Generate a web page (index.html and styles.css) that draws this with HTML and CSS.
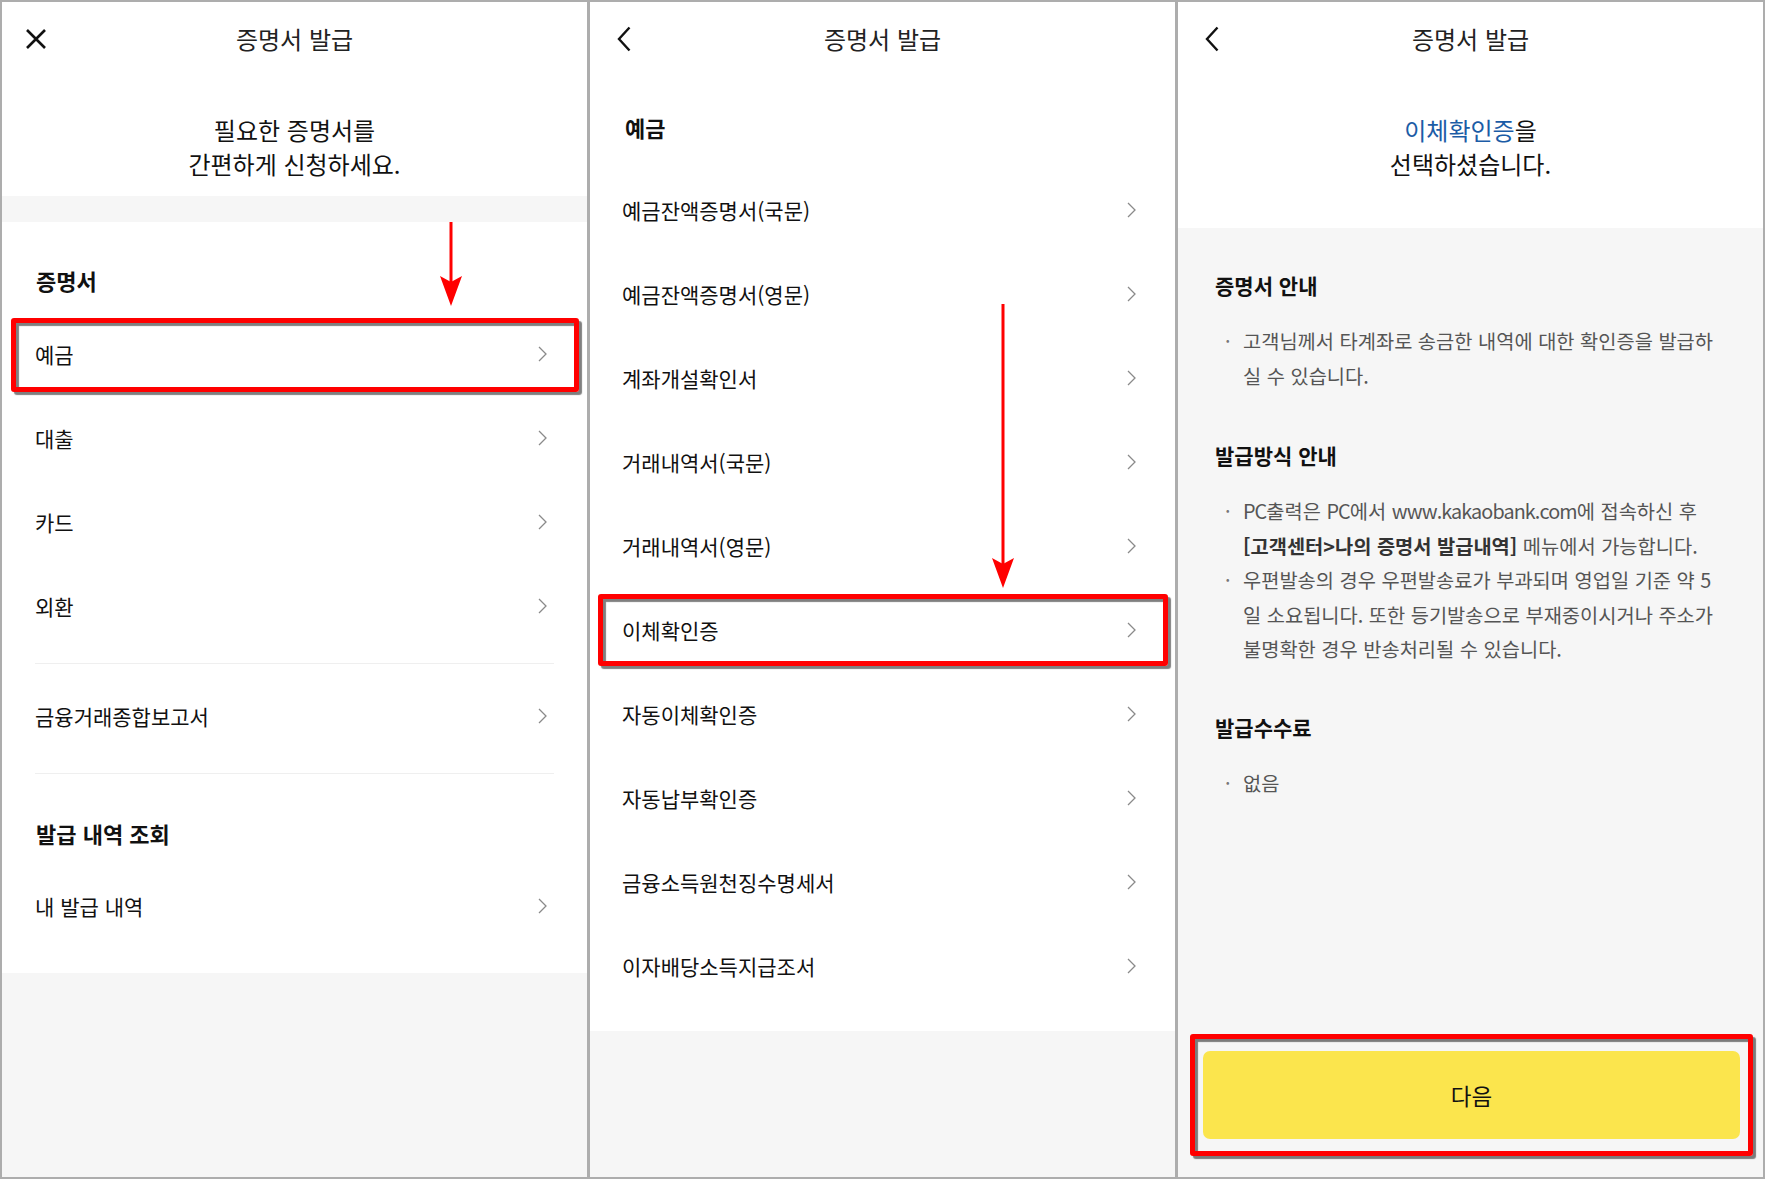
FILE: index.html
```html
<!DOCTYPE html>
<html lang="ko">
<head>
    <meta charset="UTF-8">
    <meta name="viewport" content="width=device-width, initial-scale=1.0">
    <title>증명서 발급</title>
    <link rel="stylesheet" href="styles.css">
</head>
<body>
    <div class="screens">

        <!-- 1. 증명서 종류 -->
        <div class="panel">
            <div class="topbar">
                <svg class="icon-close" width="22" height="22" viewBox="0 0 22 22"><path d="M2 2L20 20M20 2L2 20" stroke="#111" stroke-width="2.6" fill="none"/></svg>
                <div class="title">증명서 발급</div>
                <span></span>
            </div>
            <div class="intro">필요한 증명서를<br>간편하게 신청하세요.</div>
            <div class="band"></div>
            <div class="list-section">
                <h3 class="sec-title">증명서</h3>
                <div class="group">
                    <div class="row">예금 <svg class="chev" width="9" height="16" viewBox="0 0 9 16"><path d="M1 1L8 8L1 15" stroke="#8a8a8a" stroke-width="1.3" fill="none"/></svg>
                        <div class="mark mark-row"></div>
                    </div>
                    <div class="row">대출 <svg class="chev" width="9" height="16" viewBox="0 0 9 16"><path d="M1 1L8 8L1 15" stroke="#8a8a8a" stroke-width="1.3" fill="none"/></svg></div>
                    <div class="row">카드 <svg class="chev" width="9" height="16" viewBox="0 0 9 16"><path d="M1 1L8 8L1 15" stroke="#8a8a8a" stroke-width="1.3" fill="none"/></svg></div>
                    <div class="row">외환 <svg class="chev" width="9" height="16" viewBox="0 0 9 16"><path d="M1 1L8 8L1 15" stroke="#8a8a8a" stroke-width="1.3" fill="none"/></svg></div>
                </div>
                <div class="group group-single">
                    <div class="row">금융거래종합보고서 <svg class="chev" width="9" height="16" viewBox="0 0 9 16"><path d="M1 1L8 8L1 15" stroke="#8a8a8a" stroke-width="1.3" fill="none"/></svg></div>
                </div>
                <h3 class="sec-title sec-second">발급 내역 조회</h3>
                <div class="group group-last">
                    <div class="row">내 발급 내역 <svg class="chev" width="9" height="16" viewBox="0 0 9 16"><path d="M1 1L8 8L1 15" stroke="#8a8a8a" stroke-width="1.3" fill="none"/></svg></div>
                </div>
            </div>
            <svg class="arrow arrow-one" width="24" height="84" viewBox="0 0 24 84"><path d="M12 0V60" stroke="#f00" stroke-width="3"/><path d="M1 54L12 60L23 54L12 84Z" fill="#f00"/></svg>
        </div>

        <!-- 2. 예금 증명서 목록 -->
        <div class="panel">
            <div class="topbar">
                <svg class="icon-back" width="14" height="26" viewBox="0 0 14 26"><path d="M12.5 1.5L2 13L12.5 24.5" stroke="#111" stroke-width="2.4" fill="none"/></svg>
                <div class="title">증명서 발급</div>
                <span></span>
            </div>
            <div class="list-section list-deposit">
                <h3 class="sec-title">예금</h3>
                <div class="row">예금잔액증명서(국문) <svg class="chev" width="9" height="16" viewBox="0 0 9 16"><path d="M1 1L8 8L1 15" stroke="#8a8a8a" stroke-width="1.3" fill="none"/></svg></div>
                <div class="row">예금잔액증명서(영문) <svg class="chev" width="9" height="16" viewBox="0 0 9 16"><path d="M1 1L8 8L1 15" stroke="#8a8a8a" stroke-width="1.3" fill="none"/></svg></div>
                <div class="row">계좌개설확인서 <svg class="chev" width="9" height="16" viewBox="0 0 9 16"><path d="M1 1L8 8L1 15" stroke="#8a8a8a" stroke-width="1.3" fill="none"/></svg></div>
                <div class="row">거래내역서(국문) <svg class="chev" width="9" height="16" viewBox="0 0 9 16"><path d="M1 1L8 8L1 15" stroke="#8a8a8a" stroke-width="1.3" fill="none"/></svg></div>
                <div class="row">거래내역서(영문) <svg class="chev" width="9" height="16" viewBox="0 0 9 16"><path d="M1 1L8 8L1 15" stroke="#8a8a8a" stroke-width="1.3" fill="none"/></svg></div>
                <div class="row">이체확인증 <svg class="chev" width="9" height="16" viewBox="0 0 9 16"><path d="M1 1L8 8L1 15" stroke="#8a8a8a" stroke-width="1.3" fill="none"/></svg>
                    <div class="mark mark-row2"></div>
                </div>
                <div class="row">자동이체확인증 <svg class="chev" width="9" height="16" viewBox="0 0 9 16"><path d="M1 1L8 8L1 15" stroke="#8a8a8a" stroke-width="1.3" fill="none"/></svg></div>
                <div class="row">자동납부확인증 <svg class="chev" width="9" height="16" viewBox="0 0 9 16"><path d="M1 1L8 8L1 15" stroke="#8a8a8a" stroke-width="1.3" fill="none"/></svg></div>
                <div class="row">금융소득원천징수명세서 <svg class="chev" width="9" height="16" viewBox="0 0 9 16"><path d="M1 1L8 8L1 15" stroke="#8a8a8a" stroke-width="1.3" fill="none"/></svg></div>
                <div class="row">이자배당소득지급조서 <svg class="chev" width="9" height="16" viewBox="0 0 9 16"><path d="M1 1L8 8L1 15" stroke="#8a8a8a" stroke-width="1.3" fill="none"/></svg></div>
            </div>
            <svg class="arrow arrow-two" width="24" height="284" viewBox="0 0 24 284"><path d="M12 0V260" stroke="#f00" stroke-width="3"/><path d="M1 254L12 260L23 254L12 284Z" fill="#f00"/></svg>
        </div>

        <!-- 3. 선택 확인 -->
        <div class="panel">
            <div class="topbar">
                <svg class="icon-back" width="14" height="26" viewBox="0 0 14 26"><path d="M12.5 1.5L2 13L12.5 24.5" stroke="#111" stroke-width="2.4" fill="none"/></svg>
                <div class="title">증명서 발급</div>
                <span></span>
            </div>
            <div class="intro intro-picked"><span class="picked">이체확인증</span>을<br>선택하셨습니다.</div>
            <div class="info">
                <h3 class="info-title">증명서 안내</h3>
                <ul class="notes">
                    <li>고객님께서 타계좌로 송금한 내역에 대한 확인증을 발급하<br>실 수 있습니다.</li>
                </ul>
                <h3 class="info-title">발급방식 안내</h3>
                <ul class="notes notes-tight">
                    <li><span class="latin">PC</span>출력은 <span class="latin">PC</span>에서 <span class="latin">www.kakaobank.com</span>에 접속하신 후<br><b>[고객센터&gt;나의 증명서 발급내역]</b> 메뉴에서 가능합니다.</li>
                    <li>우편발송의 경우 우편발송료가 부과되며 영업일 기준 약 5<br>일 소요됩니다. 또한 등기발송으로 부재중이시거나 주소가<br>불명확한 경우 반송처리될 수 있습니다.</li>
                </ul>
                <h3 class="info-title">발급수수료</h3>
                <ul class="notes">
                    <li>없음</li>
                </ul>
            </div>
            <div class="bottom">
                <button class="next-btn">다음</button>
                <div class="mark mark-btn"></div>
            </div>
        </div>

    </div>
</body>
</html>
```

FILE: styles.css
```css
body {
    margin: 0;
    font-family: "Noto Sans CJK KR", "Noto Sans", sans-serif;
    color: #111;
}

.screens {
    display: flex;
    gap: 3px;
    padding: 2px;
    width: 1765px;
    height: 1179px;
    box-sizing: border-box;
    background: #adadad;
}

.panel {
    flex: 1;
    position: relative;
    display: flex;
    flex-direction: column;
    background: #f6f6f6;
    overflow: hidden;
}

.topbar {
    height: 74px;
    padding: 0 12px;
    display: grid;
    grid-template-columns: 44px 1fr 44px;
    align-items: center;
    justify-items: center;
    background: white;
}

.title {
    font-size: 24px;
    line-height: 30px;
    color: #222;
}

.intro {
    background: white;
    text-align: center;
    font-size: 24px;
    line-height: 34px;
    padding: 37px 0 15px;
}

.intro-picked {
    padding-bottom: 47px;
}

.picked {
    color: #1c5ca6;
}

.band {
    height: 26px;
}

.list-section {
    background: white;
    padding: 43px 33px 0;
}

.sec-title {
    margin: 0 0 17px;
    font-size: 22px;
    line-height: 30px;
    font-weight: 700;
    padding-left: 1px;
}

.sec-second {
    margin-top: 44px;
    margin-bottom: 16px;
}

.group {
    padding-bottom: 15px;
    border-bottom: 1px solid #efefef;
}

.group-single {
    padding-top: 10px;
}

.group-last {
    border-bottom: none;
    padding-bottom: 25px;
}

.row {
    position: relative;
    height: 84px;
    display: flex;
    align-items: center;
    justify-content: space-between;
    font-size: 21px;
    padding-right: 7px;
}

.list-deposit {
    padding: 36px 33px 23px 32px;
}

.list-deposit .sec-title {
    margin-bottom: 26px;
    padding-left: 3px;
}

.list-deposit .row {
    padding-right: 6px;
}

.info {
    padding: 42px 30px 0 37px;
}

.info-title {
    margin: 0;
    font-size: 21px;
    line-height: 30px;
    font-weight: 700;
}

.notes {
    list-style: none;
    margin: 23px 0 47px;
    padding: 0 0 0 28px;
    font-size: 19.8px;
    line-height: 35px;
    color: #555;
    white-space: nowrap;
}

.notes-tight {
    margin-top: 24px;
    margin-bottom: 45px;
    line-height: 34.5px;
}

.notes li {
    position: relative;
}

.notes li::before {
    content: "·";
    position: absolute;
    left: -18px;
    color: #777;
}

.notes b {
    color: #333;
}

.latin {
    letter-spacing: -0.9px;
}

.bottom {
    margin-top: auto;
    position: relative;
    padding: 0 23px 38px 25px;
}

.next-btn {
    width: 100%;
    height: 88px;
    border: none;
    border-radius: 7px;
    background: #fbe54d;
    font-family: inherit;
    font-size: 22.5px;
    color: #111;
}

/* 빨간 강조 박스 */
.mark {
    position: absolute;
    border: 5px solid #ff0000;
    border-radius: 3px;
    box-shadow: 3px 3px 1px rgba(0, 0, 0, 0.5), inset 3px 3px 1px rgba(0, 0, 0, 0.5);
    pointer-events: none;
}

.mark-row {
    top: 6px;
    bottom: 4px;
    left: -24px;
    right: -25px;
}

.mark-row2 {
    top: 6px;
    bottom: 6px;
    left: -24px;
    right: -26px;
}

.mark-btn {
    top: -17px;
    bottom: 21px;
    left: 12px;
    right: 10px;
}

.arrow {
    position: absolute;
}

.arrow-one {
    left: 437px;
    top: 220px;
}

.arrow-two {
    left: 401px;
    top: 302px;
}
```
